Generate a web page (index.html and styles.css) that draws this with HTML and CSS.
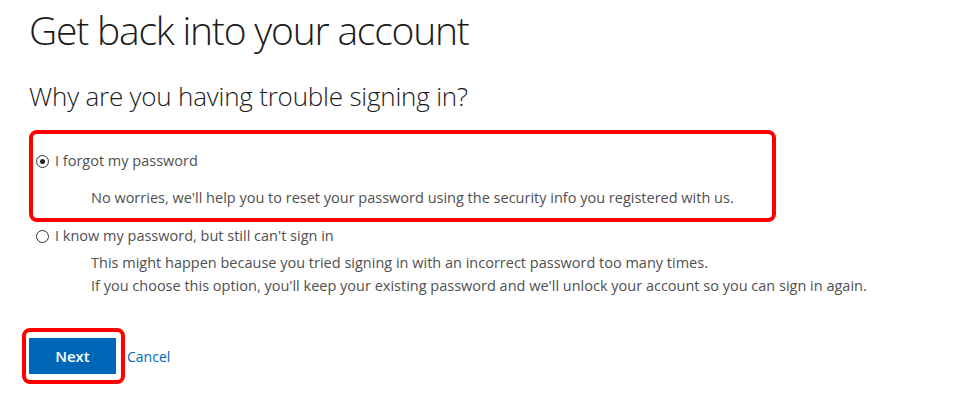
FILE: index.html
```html
<!DOCTYPE html>
<html>
<head>
<meta charset="utf-8">
<link rel="stylesheet" href="styles.css">
</head>
<body>
<div class="page">
  <h1 class="title">Get back into your account</h1>
  <h2 class="subtitle">Why are you having trouble signing in?</h2>
  <div class="options">
    <div class="option highlight">
      <label class="choice"><span class="radio checked"></span><span class="label">I forgot my password</span></label>
      <p class="desc first">No worries, we'll help you to reset your password using the security info you registered with us.</p>
    </div>
    <div class="option second">
      <label class="choice"><span class="radio"></span><span class="label">I know my password, but still can't sign in</span></label>
      <div class="desc-group">
        <p class="desc">This might happen because you tried signing in with an incorrect password too many times.</p>
        <p class="desc">If you choose this option, you'll keep your existing password and we'll unlock your account so you can sign in again.</p>
      </div>
    </div>
  </div>
  <div class="actions">
    <div class="btn-frame"><button class="btn-next">Next</button></div>
    <a class="cancel" href="#">Cancel</a>
  </div>
</div>
</body>
</html>
```
FILE: styles.css
```css
html, body {
  margin: 0;
  padding: 0;
  background: #ffffff;
}
body {
  font-family: "Open Sans", "Segoe UI", sans-serif;
  color: #505050;
}
.page {
  padding: 0 0 0 29px;
  width: 900px;
}
.title {
  margin: 0;
  padding-top: 4px;
  font-size: 39px;
  font-weight: 300;
  color: #1b1b1b;
  line-height: 52px;
  letter-spacing: -1.2px;
}
.subtitle {
  margin: 22px 0 0 0;
  font-size: 26px;
  font-weight: 300;
  color: #1b1b1b;
  line-height: 36px;
  letter-spacing: -0.2px;
}
.options {
  margin-top: 16px;
}
.option.highlight {
  width: 736px;
  border: 4px solid #ff0000;
  border-radius: 8px;
  padding: 17px 0 9px 3px;
}
.choice {
  display: flex;
  align-items: center;
  gap: 6px;
  font-size: 14.5px;
  line-height: 20px;
}
.radio {
  width: 11px;
  height: 11px;
  border: 1.5px solid #333;
  border-radius: 50%;
  position: relative;
  flex: none;
}
.radio.checked::after {
  content: "";
  position: absolute;
  left: 3px;
  top: 3px;
  width: 5px;
  height: 5px;
  border-radius: 50%;
  background: #222;
}
.desc {
  margin: 0;
  padding-left: 55px;
  font-size: 14.5px;
  line-height: 23px;
  color: #505050;
}
.desc.first {
  margin-top: 15px;
}
.option.second {
  padding: 4px 0 0 7px;
}
.desc-group {
  margin-top: 5px;
}
.actions {
  display: flex;
  align-items: center;
  margin-top: 31px;
  margin-left: -7px;
}
.btn-frame {
  border: 4px solid #ff0000;
  border-radius: 8px;
  padding: 6px 5px 6px 3px;
}
.btn-next {
  display: block;
  width: 87px;
  height: 36px;
  border: none;
  background: #0067b8;
  color: #ffffff;
  font-family: "Open Sans", sans-serif;
  font-size: 15px;
  font-weight: 600;
}
.cancel {
  margin-left: 2px;
  font-size: 14px;
  color: #0067b8;
  text-decoration: none;
}
```
